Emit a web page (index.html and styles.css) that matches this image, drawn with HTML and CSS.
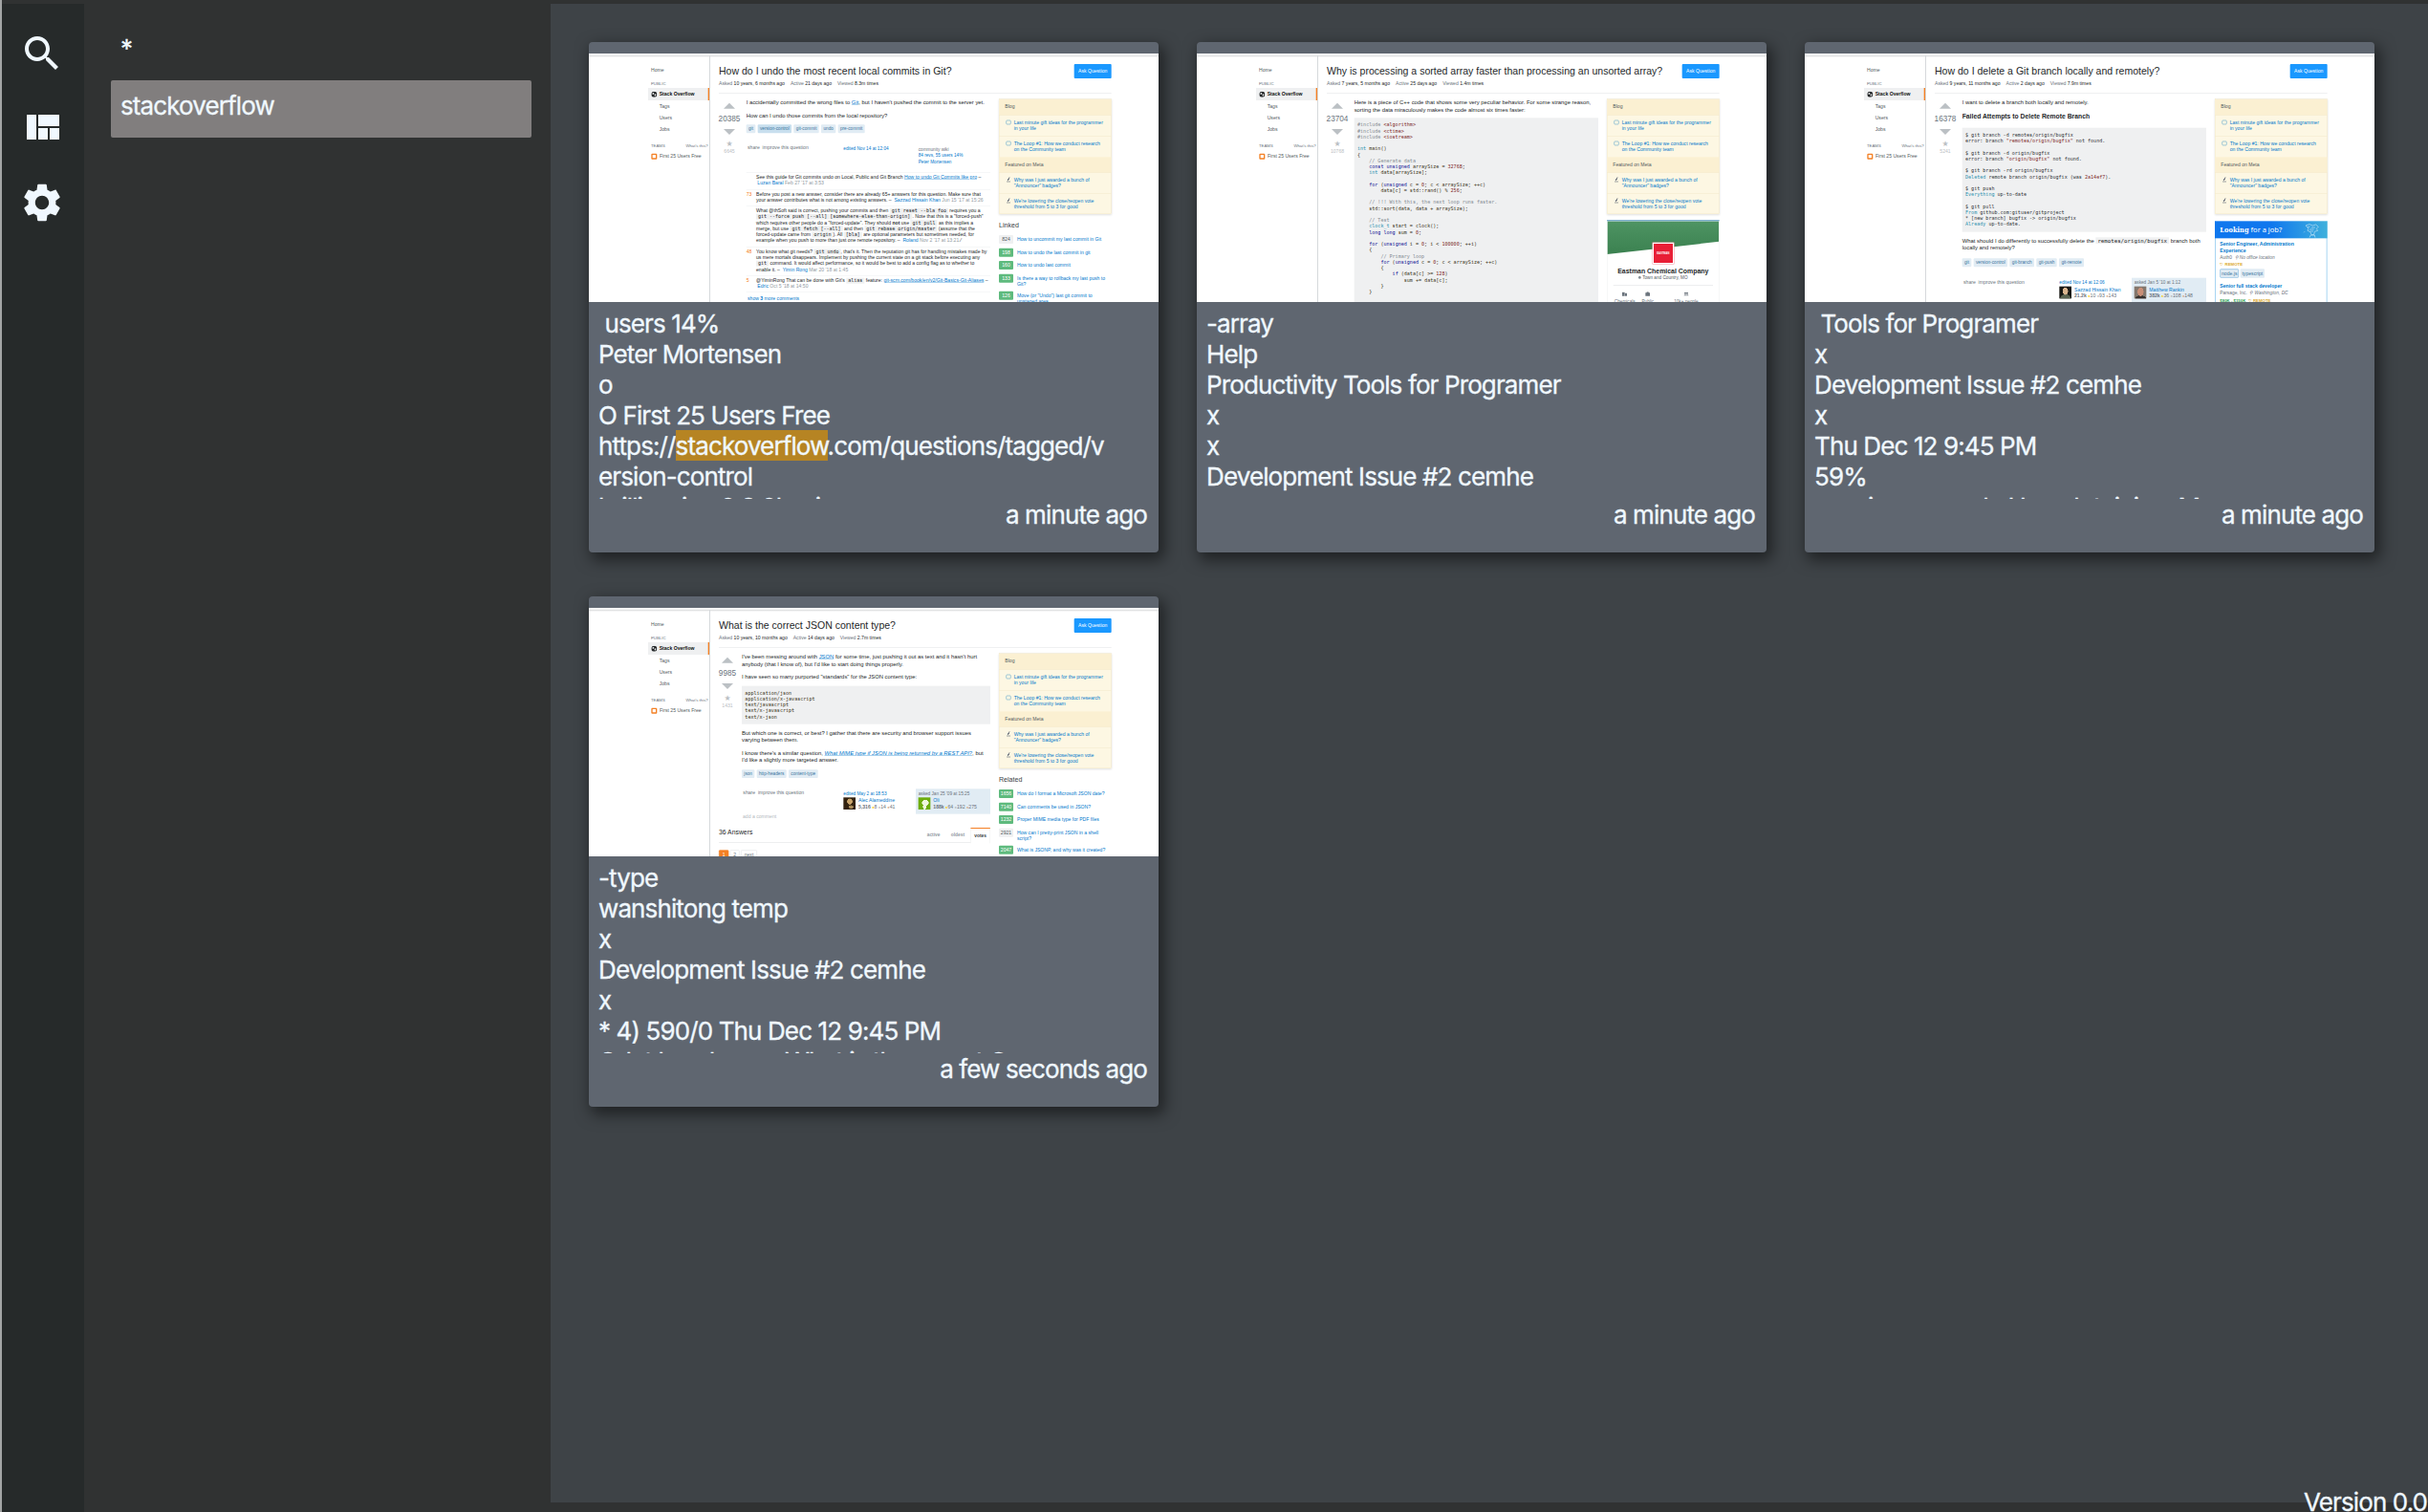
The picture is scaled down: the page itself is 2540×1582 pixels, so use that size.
FILE: index.html
```html
<!DOCTYPE html>
<html lang="en">
<head>
<meta charset="utf-8">
<title>Search</title>
<link rel="stylesheet" href="styles.css">
</head>
<body>
<div class="app">
  <nav class="rail">
    <svg class="icon" viewBox="0 0 24 24"><path d="M15.5 14h-.79l-.28-.27C15.41 12.59 16 11.11 16 9.5 16 5.91 13.09 3 9.5 3S3 5.91 3 9.5 5.91 16 9.5 16c1.61 0 3.09-.59 4.23-1.57l.27.28v.79l5 4.99L20.49 19l-4.99-5zm-6 0C7.01 14 5 11.99 5 9.5S7.01 5 9.5 5 14 7.01 14 9.5 11.99 14 9.5 14z"/></svg>
    <svg class="icon" viewBox="0 0 24 24"><path d="M10 18h5v-6h-5v6zm-6 0h5V5H4v13zm12 0h5v-6h-5v6zM10 5v6h11V5H10z"/></svg>
    <svg class="icon" viewBox="0 0 24 24"><path d="M19.14 12.94c.04-.3.06-.61.06-.94 0-.32-.02-.64-.07-.94l2.03-1.58c.18-.14.23-.41.12-.61l-1.92-3.32c-.12-.22-.37-.29-.59-.22l-2.39.96c-.5-.38-1.03-.7-1.62-.94l-.36-2.54c-.04-.24-.24-.41-.48-.41h-3.84c-.24 0-.43.17-.47.41l-.36 2.54c-.59.24-1.13.57-1.62.94l-2.39-.96c-.22-.08-.47 0-.59.22L2.74 8.87c-.12.21-.08.47.12.61l2.03 1.58c-.05.3-.09.63-.09.94s.02.64.07.94l-2.03 1.58c-.18.14-.23.41-.12.61l1.92 3.32c.12.22.37.29.59.22l2.39-.96c.5.38 1.03.7 1.62.94l.36 2.54c.05.24.24.41.48.41h3.84c.24 0 .44-.17.47-.41l.36-2.54c.59-.24 1.13-.56 1.62-.94l2.39.96c.22.08.47 0 .59-.22l1.92-3.32c.12-.22.07-.47-.12-.61l-2.01-1.58zM12 15.6c-1.98 0-3.6-1.62-3.6-3.6s1.62-3.6 3.6-3.6 3.6 1.62 3.6 3.6-1.62 3.6-3.6 3.6z"/></svg>
  </nav>
  <aside class="queries">
    <div class="query">*</div>
    <div class="query selected">stackoverflow</div>
  </aside>
  <main class="results">

    <article class="card">
      <div class="thumb"><div class="page">
        <div class="nav">
          <div class="nav-home">Home</div><div class="nav-label">PUBLIC</div>
          <div class="nav-on"><svg class="globe" viewBox="0 0 18 18"><circle cx="9" cy="9" r="9"/><path d="M4 5l4-1 1 3-3 3-3-2zM10 9l4-1 1 3-3 4-2-2z"/></svg>Stack Overflow</div>
          <div class="nav-item">Tags</div><div class="nav-item">Users</div><div class="nav-item">Jobs</div>
          <div class="nav-label teams"><span>TEAMS</span><span>What's this?</span></div>
          <div class="nav-free"><i class="team-icon"></i>First 25 Users Free</div>
        </div>
        <div class="content">
          <div class="head"><div class="title">How do I undo the most recent local commits in Git?</div><div class="ask">Ask Question</div></div>
          <div class="meta"><span>Asked <b>10 years, 6 months ago</b></span><span>Active <b>21 days ago</b></span><span>Viewed <b>8.3m times</b></span></div>
          <div class="cols">
            <div class="votes"><i class="up"></i><div class="count">20385</div><i class="down"></i><div class="star">★</div><div class="fav">6645</div></div>
            <div class="post">
              <p>I accidentally committed the wrong files to <u>Git</u>, but I haven't pushed the commit to the server yet.</p>
              <p>How can I undo those commits from the local repository?</p>
              <div class="tags t1"><span>git</span><span class="dark">version-control</span><span>git-commit</span><span>undo</span><span>pre-commit</span></div>
              <div class="sig s1"><div class="share">share  improve this question</div><div class="edited"><a>edited Nov 14 at 12:04</a></div><div class="wiki">community wiki<br><a>84 revs, 55 users 14%<br>Peter Mortensen</a></div></div>
              <div class="comments">
                <div class="c c1"><b></b><div>See this guide for Git commits undo on Local, Public and Git Branch <u>How to undo Git Commits like pro</u> –<br> <a>Luzan Baral</a> <s>Feb 27 '17 at 3:53</s></div></div>
                <div class="c c2"><b>73</b><div>Before you post a new answer, consider there are already 65+ answers for this question. Make sure that<br>your answer contributes what is not among existing answers. – <a>Sazzad Hissain Khan</a> <s>Jun 15 '17 at 15:26</s></div></div>
                <div class="c c3"><b></b><div>What @thSoft said is correct, pushing your commits and then <code>git reset --bla foo</code> requires you a<br><code>git --force push [--all] [somewhere-else-than-origin]</code>. Note that this is a "forced-push"<br>which requires other people do a "forced-update". They should <strong>not</strong> use <code>git pull</code> as this implies a<br>merge, but use <code>git fetch [--all]</code> and then <code>git rebase origin/master</code> (assume that the<br>forced-update came from <code>origin</code>). All <code>[bla]</code> are optional parameters but sometimes needed, for<br>example when you push to more than just one remote repository. – <a>Roland</a> <s>Nov 2 '17 at 13:21</s> ⁄</div></div>
                <div class="c c4"><b>48</b><div>You know what git needs? <code>git undo</code>, that's it. Then the reputation git has for handling mistakes made by<br>us mere mortals disappears. Implement by pushing the current state on a git stack before executing any<br><code>git</code> command. It would affect performance, so it would be best to add a config flag as to whether to<br>enable it. – <a>Yimin Rong</a> <s>Mar 20 '18 at 1:45</s></div></div>
                <div class="c c5"><b>5</b><div>@YiminRong That can be done with Git's <code>alias</code> feature: <u>git-scm.com/book/en/v2/Git-Basics-Git-Aliases</u> –<br> <a>Edric</a> <s>Oct 5 '18 at 14:50</s></div></div>
                <div class="more">show <b>3</b> more comments</div>
              </div>
            </div>
            <div class="side">
              <div class="blog"><h6>Blog</h6><div><i class="chat"></i>Last minute gift ideas for the programmer<br>in your life</div><div><i class="chat"></i>The Loop #1: How we conduct research<br>on the Community team</div><h6>Featured on Meta</h6><div><i class="meta-icon"></i>Why was I just awarded a bunch of<br>"Announcer" badges?</div><div><i class="meta-icon"></i>We're lowering the close/reopen vote<br>threshold from 5 to 3 for good</div></div>
              <h5>Linked</h5>
              <div class="link"><span class="grey">824</span>How to uncommit my last commit in Git</div>
              <div class="link"><span>198</span>How to undo the last commit in git</div>
              <div class="link"><span>160</span>How to undo last commit</div>
              <div class="link two"><span>133</span>Is there a way to rollback my last push to<br>Git?</div>
              <div class="link two"><span>126</span>Move (or "Undo") last git commit to<br>unstaged area</div>
            </div>
          </div>
        </div>
      </div></div>
      <div class="text"> users 14%
Peter Mortensen
o
O First 25 Users Free
https://<mark>stackoverflow</mark>.com/questions/tagged/v
ersion-control
brilliansien 2 8 2l oni</div>
      <div class="date">a minute ago</div>
    </article>

    <article class="card">
      <div class="thumb"><div class="page">
        <div class="nav">
          <div class="nav-home">Home</div><div class="nav-label">PUBLIC</div>
          <div class="nav-on"><svg class="globe" viewBox="0 0 18 18"><circle cx="9" cy="9" r="9"/><path d="M4 5l4-1 1 3-3 3-3-2zM10 9l4-1 1 3-3 4-2-2z"/></svg>Stack Overflow</div>
          <div class="nav-item">Tags</div><div class="nav-item">Users</div><div class="nav-item">Jobs</div>
          <div class="nav-label teams"><span>TEAMS</span><span>What's this?</span></div>
          <div class="nav-free"><i class="team-icon"></i>First 25 Users Free</div>
        </div>
        <div class="content">
          <div class="head"><div class="title">Why is processing a sorted array faster than processing an unsorted array?</div><div class="ask">Ask Question</div></div>
          <div class="meta"><span>Asked <b>7 years, 5 months ago</b></span><span>Active <b>25 days ago</b></span><span>Viewed <b>1.4m times</b></span></div>
          <div class="cols">
            <div class="votes"><i class="up"></i><div class="count">23704</div><i class="down"></i><div class="star">★</div><div class="fav">10768</div></div>
            <div class="post">
              <p>Here is a piece of C++ code that shows some very peculiar behavior. For some strange reason,<br>sorting the data miraculously makes the code almost six times faster:</p>
              <pre class="cpp"><s>#include </s><em>&lt;algorithm&gt;</em>
<s>#include </s><em>&lt;ctime&gt;</em>
<s>#include </s><em>&lt;iostream&gt;</em>

<a>int</a> main()
{
    <s>// Generate data</s>
    <b>const unsigned</b> arraySize = <em>32768</em>;
    <a>int</a> data[arraySize];

    <b>for</b> (<b>unsigned</b> c = <em>0</em>; c &lt; arraySize; ++c)
        data[c] = std::rand() % <em>256</em>;

    <s>// !!! With this, the next loop runs faster.</s>
    std::sort(data, data + arraySize);

    <s>// Test</s>
    <a>clock_t</a> start = clock();
    <b>long long</b> sum = <em>0</em>;

    <b>for</b> (<b>unsigned</b> i = <em>0</em>; i &lt; <em>100000</em>; ++i)
    {
        <s>// Primary loop</s>
        <b>for</b> (<b>unsigned</b> c = <em>0</em>; c &lt; arraySize; ++c)
        {
            <b>if</b> (data[c] &gt;= <em>128</em>)
                sum += data[c];
        }
    }
</pre>
            </div>
            <div class="side">
              <div class="blog"><h6>Blog</h6><div><i class="chat"></i>Last minute gift ideas for the programmer<br>in your life</div><div><i class="chat"></i>The Loop #1: How we conduct research<br>on the Community team</div><h6>Featured on Meta</h6><div><i class="meta-icon"></i>Why was I just awarded a bunch of<br>"Announcer" badges?</div><div><i class="meta-icon"></i>We're lowering the close/reopen vote<br>threshold from 5 to 3 for good</div></div>
              <div class="company">
                <div class="banner"></div><div class="logo">EASTMAN</div>
                <div class="cname">Eastman Chemical Company</div><div class="cplace"><i></i>Town and Country, MO</div>
                <div class="facts"><div><svg viewBox="0 0 16 14"><path d="M0 1h8v12H0zM9 4h6v9H9z"/></svg>Chemicals</div><div><svg viewBox="0 0 16 14"><path d="M5 0h6v3h4v10H1V3h4z"/></svg>Public</div><div><svg viewBox="0 0 16 14"><circle cx="5" cy="4" r="3"/><circle cx="11" cy="4" r="3"/><path d="M0 12q5-7 10 0zM10 12l-1-3q5-2 7 3z"/></svg>10k+ people</div></div>
              </div>
            </div>
          </div>
        </div>
      </div></div>
      <div class="text">-array
Help
Productivity Tools for Programer
x
x
Development Issue #2 cemhe
</div>
      <div class="date">a minute ago</div>
    </article>

    <article class="card">
      <div class="thumb"><div class="page">
        <div class="nav">
          <div class="nav-home">Home</div><div class="nav-label">PUBLIC</div>
          <div class="nav-on"><svg class="globe" viewBox="0 0 18 18"><circle cx="9" cy="9" r="9"/><path d="M4 5l4-1 1 3-3 3-3-2zM10 9l4-1 1 3-3 4-2-2z"/></svg>Stack Overflow</div>
          <div class="nav-item">Tags</div><div class="nav-item">Users</div><div class="nav-item">Jobs</div>
          <div class="nav-label teams"><span>TEAMS</span><span>What's this?</span></div>
          <div class="nav-free"><i class="team-icon"></i>First 25 Users Free</div>
        </div>
        <div class="content">
          <div class="head"><div class="title">How do I delete a Git branch locally and remotely?</div><div class="ask">Ask Question</div></div>
          <div class="meta"><span>Asked <b>9 years, 11 months ago</b></span><span>Active <b>2 days ago</b></span><span>Viewed <b>7.9m times</b></span></div>
          <div class="cols">
            <div class="votes"><i class="up"></i><div class="count">16378</div><i class="down"></i><div class="star">★</div><div class="fav">5241</div></div>
            <div class="post">
              <p>I want to delete a branch both locally and remotely.</p>
              <h4>Failed Attempts to Delete Remote Branch</h4>
              <pre class="sh">$ git branch -d remotes/origin/bugfix
error: branch <em>"remotes/origin/bugfix"</em> not found.

$ git branch -d origin/bugfix
error: branch <em>"origin/bugfix"</em> not found.

$ git branch -rd origin/bugfix
<a>Deleted</a> remote branch origin/bugfix (was <em>2a14ef7</em>).

$ git push
<a>Everything</a> up-to-date

$ git pull
<a>From</a> github.com:gituser/gitproject
* [new branch] bugfix -&gt; origin/bugfix
<a>Already</a> up-to-date.</pre>
              <p>What should I do differently to successfully delete the <code>remotes/origin/bugfix</code> branch both<br>locally and remotely?</p>
              <div class="tags t3"><span>git</span><span>version-control</span><span>git-branch</span><span>git-push</span><span>git-remote</span></div>
              <div class="sig s3"><div class="share">share  improve this question</div>
                <div class="user edited"><a>edited Nov 14 at 12:06</a><div><i class="face f1"></i><span><a>Sazzad Hissain Khan</a><br><b>21.2k</b> <q>●</q>10 <q class="ag">●</q>93 <q class="br">●</q>143</span></div></div>
                <div class="user asked">asked Jan 5 '10 at 1:12<div><i class="face f2"></i><span><a>Matthew Rankin</a><br><b>382k</b> <q>●</q>36 <q class="ag">●</q>108 <q class="br">●</q>148</span></div></div></div>
            </div>
            <div class="side">
              <div class="blog"><h6>Blog</h6><div><i class="chat"></i>Last minute gift ideas for the programmer<br>in your life</div><div><i class="chat"></i>The Loop #1: How we conduct research<br>on the Community team</div><h6>Featured on Meta</h6><div><i class="meta-icon"></i>Why was I just awarded a bunch of<br>"Announcer" badges?</div><div><i class="meta-icon"></i>We're lowering the close/reopen vote<br>threshold from 5 to 3 for good</div></div>
              <div class="jobs">
                <div class="jobs-head"><span><b>Looking</b> for a job?</span><svg viewBox="0 0 52 44"><path d="M8 6l12-4 10 4 10-3 8 7-6 6 4 6-10 3-2 10h-8l-3-9-9-4 3-7zM14 10h8M26 12h12M20 18h14M22 24h10M20 44l4-8h12l2 8M2 28l3-3"/></svg></div>
                <div class="jobs-body"><strong>Senior Engineer, Administration<br>Experience</strong><div class="firm">Auth0 &nbsp;<i>⚲ No office location</i></div><div class="remote">♡ REMOTE</div><div class="jtags"><span>node.js</span><span>typescript</span></div><strong>Senior full stack developer</strong><div class="firm">Parsage, Inc. &nbsp;<i>⚲ Washington, DC</i></div><div class="remote"><em>$80K - $150K</em> &nbsp;♡ REMOTE</div></div>
              </div>
            </div>
          </div>
        </div>
      </div></div>
      <div class="text"> Tools for Programer
x
Development Issue #2 cemhe
x
Thu Dec 12 9:45 PM
59%
envei censera de Havedr teioi nc M</div>
      <div class="date">a minute ago</div>
    </article>

    <article class="card">
      <div class="thumb"><div class="page">
        <div class="nav">
          <div class="nav-home">Home</div><div class="nav-label">PUBLIC</div>
          <div class="nav-on"><svg class="globe" viewBox="0 0 18 18"><circle cx="9" cy="9" r="9"/><path d="M4 5l4-1 1 3-3 3-3-2zM10 9l4-1 1 3-3 4-2-2z"/></svg>Stack Overflow</div>
          <div class="nav-item">Tags</div><div class="nav-item">Users</div><div class="nav-item">Jobs</div>
          <div class="nav-label teams"><span>TEAMS</span><span>What's this?</span></div>
          <div class="nav-free"><i class="team-icon"></i>First 25 Users Free</div>
        </div>
        <div class="content">
          <div class="head"><div class="title">What is the correct JSON content type?</div><div class="ask">Ask Question</div></div>
          <div class="meta"><span>Asked <b>10 years, 10 months ago</b></span><span>Active <b>14 days ago</b></span><span>Viewed <b>2.7m times</b></span></div>
          <div class="cols">
            <div class="left">
              <div class="qa">
                <div class="votes narrow"><i class="up"></i><div class="count">9985</div><i class="down"></i><div class="star">★</div><div class="fav">1431</div></div>
                <div class="post">
                  <p>I've been messing around with <u>JSON</u> for some time, just pushing it out as text and it hasn't hurt<br>anybody (that I know of), but I'd like to start doing things properly.</p>
                  <p>I have seen so many purported "standards" for the JSON content type:</p>
                  <pre class="json">application/json
application/x-javascript
text/javascript
text/x-javascript
text/x-json</pre>
                  <p>But which one is correct, or best? I gather that there are security and browser support issues<br>varying between them.</p>
                  <p>I know there's a similar question, <u><i>What MIME type if JSON is being returned by a REST API?</i></u>, but<br>I'd like a slightly more targeted answer.</p>
                  <div class="tags t4"><span>json</span><span>http-headers</span><span>content-type</span></div>
                  <div class="sig s4"><div class="share">share  improve this question</div>
                    <div class="user edited"><a>edited May 2 at 18:53</a><div><i class="face f3"></i><span><a>Alec Alameddine</a><br><b>5,316</b> <q>●</q>8 <q class="ag">●</q>14 <q class="br">●</q>41</span></div></div>
                    <div class="user asked">asked Jan 25 '09 at 15:25<div><i class="face f4"></i><span><a>Oli</a><br><b>188k</b> <q>●</q>64 <q class="ag">●</q>192 <q class="br">●</q>275</span></div></div></div>
                  <div class="add">add a comment</div>
                </div>
              </div>
              <div class="answers"><span>36 Answers</span><div class="tabs"><span>active</span><span>oldest</span><span class="on">votes</span></div></div>
              <div class="pager"><span class="on">1</span><span>2</span><span>next</span></div>
            </div>
            <div class="side">
              <div class="blog"><h6>Blog</h6><div><i class="chat"></i>Last minute gift ideas for the programmer<br>in your life</div><div><i class="chat"></i>The Loop #1: How we conduct research<br>on the Community team</div><h6>Featured on Meta</h6><div><i class="meta-icon"></i>Why was I just awarded a bunch of<br>"Announcer" badges?</div><div><i class="meta-icon"></i>We're lowering the close/reopen vote<br>threshold from 5 to 3 for good</div></div>
              <h5>Related</h5>
              <div class="link"><span>1656</span>How do I format a Microsoft JSON date?</div>
              <div class="link"><span>7140</span>Can comments be used in JSON?</div>
              <div class="link"><span>1232</span>Proper MIME media type for PDF files</div>
              <div class="link two"><span class="grey">2921</span>How can I pretty-print JSON in a shell<br>script?</div>
              <div class="link"><span>2047</span>What is JSONP, and why was it created?</div>
            </div>
          </div>
        </div>
      </div></div>
      <div class="text">-type
wanshitong temp
x
Development Issue #2 cemhe
x
* 4) 590/0 Thu Dec 12 9:45 PM
Odnt beedman - What is the comet C</div>
      <div class="date">a few seconds ago</div>
    </article>
  </main>
  <div class="version">Version 0.0.1</div>
</div>
</body>
</html>
```
FILE: styles.css
```css
* { box-sizing: border-box; }
html, body { margin: 0; height: 100%; overflow: hidden; }
body {
  font: 26px/32px Inter, "Liberation Sans", sans-serif;
  letter-spacing: -0.88px;
  -webkit-text-stroke: .3px;
  color: aliceblue;
  background: #303232;
}
.app {
  position: relative;
  display: grid;
  grid-template-columns: 86px 488px 1fr;
  height: 1582px;
  padding-top: 4px;
  border-left: 2px solid #a3a5a5;
  overflow: hidden;
}
.rail {
  display: flex;
  flex-direction: column;
  align-items: flex-start;
  gap: 30px;
  padding: 28px 0 0 18px;
  background: #262a2a;
}
.icon { width: 48px; height: 48px; fill: aliceblue; }
.queries { padding: 20px 20px 0 28px; }
.query { height: 60px; padding: 11px 10px; border-radius: 2px; }
.selected { background: #817e7e; }
.results {
  display: grid;
  grid-template-columns: repeat(3, 596px);
  grid-auto-rows: 534px;
  gap: 46px 40px;
  align-content: start;
  height: 1568px;
  padding: 40px;
  background: #3e4347;
}
.card {
  padding-top: 12px;
  border-radius: 4px;
  background: #5f6670;
  box-shadow: 4px 6px 16px 2px rgba(0, 0, 0, .5);
}
.text {
  height: 200px;
  margin: 6px 10px 0;
  padding-top: 1px;
  overflow: hidden;
  white-space: pre;
}
mark { padding-top: 1px; color: inherit; background: #b68423; }
.date { padding: 1px 12px 0; text-align: right; }
.version { position: absolute; left: 2408px; top: 1556px; white-space: nowrap; }

/* Page previews are laid out at three times their shown size. */
.thumb { width: 596px; height: 260px; overflow: hidden; background: #fff; -webkit-text-stroke: 0; }
.page {
  display: flex;
  width: 1788px;
  height: 780px;
  padding: 6px 0 0 186px;
  overflow: hidden;
  background: linear-gradient(#fff 4px, #dedfe0 7px, #fff 12px);
  color: #242729;
  font: 15.3px/18.8px "Liberation Sans", Arial, sans-serif;
  letter-spacing: 0;
  white-space: nowrap;
  transform: scale(.333333);
  transform-origin: 0 0;
}
.page a { color: #0077cc; }
.page u { color: #0077cc; }
.nav { width: 195px; height: 774px; padding-top: 27px; border-right: 3px solid #d6d9dc; color: #535a60; flex: none; }
.nav-home { height: 45px; padding: 9px; }
.nav-label { height: 30px; padding: 9px 9px 0; font-size: 12.9px; color: #6a737c; }
.nav-on { display: flex; align-items: center; height: 39px; padding-left: 10px; gap: 7px; font-weight: bold; color: #0c0d0e; background: #eff0f1; border-right: 4px solid #f48024; }
.globe { width: 18px; height: 18px; fill: #242729; }
.globe path { fill: #eff0f1; }
.nav-item { height: 36.5px; padding: 9px 0 0 35px; }
.teams { display: flex; justify-content: space-between; height: 46.5px; padding: 25px 4px 0 9px; }
.nav-free { display: flex; align-items: center; gap: 8px; height: 40px; padding-left: 10px; }
.team-icon { width: 18px; height: 18px; border: 4px solid #f48024; border-radius: 3px; }
.content { width: 1232px; margin-left: 27px; }
.head { display: flex; justify-content: space-between; height: 72px; padding-top: 27px; }
.title { padding-top: 2px; font-size: 31.6px; line-height: 42px; }
.ask { width: 117px; height: 45px; text-align: center; line-height: 45px; color: #fff; background: #1a98ff; border-radius: 3px; }
.meta { display: flex; gap: 18px; height: 48px; padding-top: 7px; border-bottom: 2px solid #e8e9ea; color: #6a737c; }
.meta b { font-weight: normal; color: #242729; }
.cols { display: flex; padding-top: 17px; }
.left { width: 852px; flex: none; }
.qa { display: flex; }
.votes { display: flex; flex-direction: column; align-items: center; width: 66px; margin-right: 20px; padding-top: 12px; flex: none; color: #bbc0c4; }
.narrow { width: 54px; margin-right: 18px; }
.up { border: 18px solid transparent; border-top: 0; border-bottom-color: #bbc0c4; }
.down { border: 18px solid transparent; border-bottom: 0; border-top-color: #bbc0c4; }
.count { height: 64px; font-size: 24.7px; line-height: 63px; color: #6a737c; }
.star { height: 40px; padding-top: 19px; font: 24px/20px "DejaVu Sans", sans-serif; }
.fav { padding-top: 4px; }
.post { width: 766px; flex: none; }
.narrow + .post { width: 780px; }
.post p { margin: 0 0 17.5px; font-size: 17.6px; line-height: 22.5px; }
.post pre { margin: 0; background: #eff0f1; font: 15.2px/18.72px "DejaVu Sans Mono", monospace; padding: 13.5px 10px; color: #393318; }
pre b { color: #101094; font-weight: normal; }
.page pre a { color: #2b91af; }
pre s { color: #858c93; text-decoration: none; }
pre em { color: #7d2727; font-style: normal; }
.post .cpp { height: 600px; margin-top: -4px; }
.post .sh { height: 327px; margin-bottom: 16px; color: #303336; }
.post .json { height: 120px; margin: -1px 0 16.5px; }
.post h4 { height: 50px; margin: 0; font-size: 20.4px; line-height: 29px; }
.post code { padding: 0 6px; background: #eff0f1; font: .98em/1 "DejaVu Sans Mono", monospace; }
.tags { display: flex; gap: 7px; }
.tags span { height: 26.5px; padding: 0 7px; font-size: 14.1px; line-height: 26px; color: #39739d; background: #e1ecf4; border-radius: 3px; }
.tags .dark { background: #c8dfee; }
.t1 { margin-top: 3px; }
.t3 { margin-top: 22px; }
.t4 { margin-top: 19px; }
.sig { display: flex; font-size: 14.1px; line-height: 20px; color: #6a737c; white-space: pre; }
.sig .share { width: 305px; padding-left: 4px; font-size: 15.3px; }
.s1 { height: 122px; padding-top: 35px; }
.s1 .edited { width: 235px; padding-top: 3px; }
.s1 .wiki { padding-top: 5px; }
.s3, .s4 { height: 112px; padding-top: 34px; white-space: nowrap; }
.s3 .share, .s4 .share { width: 297px; padding-top: 3px; white-space: pre; }
.narrow + .post .share { width: 311px; }
.user { height: 79px; padding: 4px 8px; }
.user.edited { width: 235px; }
.user.asked { width: 234px; background: #e1ecf4; }
.user > div { display: flex; gap: 9px; padding-top: 3px; }
.user > a { display: block; }
.user span { font-size: 15.3px; }
.user q { quotes: none; font-size: 12px; color: #ffcc01; }
.user .ag { color: #b4b8bc; }
.user .br { color: #d1a684; }
.face { width: 38px; height: 38px; flex: none; }
.f1 { background: radial-gradient(ellipse 9px 12px at 19px 15px, #d9b48e 90%, transparent), radial-gradient(ellipse 17px 14px at 19px 38px, #59624f 90%, transparent), #171713; }
.f2 { background: radial-gradient(ellipse 10px 14px at 20px 17px, #c98f77 90%, transparent), radial-gradient(ellipse 18px 10px at 20px 38px, #38322f 90%, transparent), #83776d; }
.f3 { background: radial-gradient(ellipse 9px 10px at 20px 13px, #c9a36a 85%, transparent), radial-gradient(ellipse 8px 6px at 24px 30px, #a98a58 80%, transparent), #33220f; }
.f4 { background: radial-gradient(ellipse 11px 9px at 22px 17px, #eef6dd 95%, transparent), radial-gradient(ellipse 6px 9px at 20px 29px, #eef6dd 90%, transparent), #6dad0c; }
.c { display: flex; border-top: 1.5px solid #e4e6e8; padding-top: 7px; }
.c > b { width: 31px; flex: none; font-weight: normal; color: #f48024; }
.c s, .more s { color: #9199a1; text-decoration: none; }
.c br + a { margin-left: 4px; }
.c1 { height: 54px; }
.c2 { height: 51px; }
.c3 { height: 131px; }
.c4 { height: 88px; padding-top: 4px; }
.c5 { height: 53px; }
.more { height: 30px; padding: 11px 4px; border-top: 1.5px solid #e4e6e8; color: #0077cc; }
.side { width: 353px; margin-left: 27px; flex: none; color: #0077cc; }
.blog { height: 361px; margin-bottom: 22px; background: #fdf7e3; border: 1px solid #f1e5bc; box-shadow: 0 2px 6px rgba(0, 0, 0, .12); }
.blog h6 { height: 48.6px; margin: 0; padding: 14px 18px; font-size: 15.3px; font-weight: normal; color: #535a60; background: #fbf0d2; }
.blog div { position: relative; height: 66px; padding: 14px 0 0 46px; border-top: 1px solid #f1e5bc; }
.blog i { position: absolute; left: 21px; top: 15px; width: 16px; height: 14px; }
.chat { border: 2px solid #6fb1cf; border-radius: 4px; }
.meta-icon { background: linear-gradient(115deg, transparent 45%, #7b8088 46% 65%, transparent 66%) no-repeat 0 0 / 15px 10px, linear-gradient(#6a737c, #6a737c) no-repeat 2px 12px / 12px 3px; }
.side h5 { margin: 0 0 21px; font-size: 21.2px; font-weight: normal; line-height: 23px; color: #3b4045; }
.link { display: flex; gap: 12px; height: 40.5px; padding-top: 4px; }
.link.two { height: 54px; }
.link span { width: 45px; height: 27px; margin-top: -4px; border-radius: 3px; text-align: center; line-height: 27px; color: #fff; background: #5eba7d; }
.link .grey { color: #535a60; background: #eff0f1; }
.company { display: flex; flex-direction: column; align-items: center; height: 300px; margin-top: -3px; border: 1px solid #e4e6e8; border-top: 3px solid #3b86b5; margin-bottom: -60px; }
.banner { width: 351px; height: 104px; background: linear-gradient(#4e9463, #3b8150); clip-path: polygon(0 0, 100% 0, 100% 62%, 0 100%); }
.logo { width: 68px; height: 68px; margin-top: -37px; border: 4px solid #fff; background: #e81f36; color: #fff; font-size: 8px; font-weight: bold; line-height: 60px; text-align: center; position: relative; }
.cname { margin-top: 9px; font-size: 20.8px; font-weight: bold; line-height: 24px; color: #242729; }
.cplace { font-size: 14px; line-height: 17px; color: #535a60; }
.cplace i { display: inline-block; width: 8px; height: 9px; margin-right: 4px; border-radius: 50%; background: #848d95; }
.facts { display: flex; width: 313px; margin-top: 15px; padding-top: 20px; border-top: 2px solid #e4e6e8; font-size: 14px; color: #6a737c; }
.facts div { flex: 1; text-align: center; line-height: 16px; }
.facts div:last-child { flex: 1 0 96px; }
.facts svg { display: block; width: 16px; height: 14px; margin: 0 auto 7px; fill: #6a737c; }
.jobs { border: 3px solid #a8d5f2; border-top: 0; height: 290px; }
.jobs-head { display: flex; justify-content: space-between; height: 54px; margin: 0 -3px; padding: 0 24px 0 16px; font: 22.5px/52px "Noto Sans", sans-serif; color: #fff; background: linear-gradient(90deg, #0f77ee 50%, #3fb0dc); }
.jobs-head b { font-family: "DejaVu Serif", serif; font-size: 20px; }
.jobs-head svg { width: 52px; height: 44px; margin-top: 8px; fill: none; stroke: #c3e4f5; stroke-width: 2; }
.jobs-body { padding: 10px 13px; }
.firm { height: 22px; padding-top: 3px; font-size: 14.5px; color: #6a737c; }
.remote { height: 24px; padding-top: 4px; font-size: 13px; font-weight: bold; color: #dba82c; }
.remote em { font-style: normal; color: #2f9e53; }
.jtags { display: flex; gap: 5px; height: 48px; padding-top: 2px; }
.jtags span { height: 28px; padding: 0 5px; line-height: 27px; color: #39739d; background: #e1ecf4; border-radius: 3px; }
.jtags span:first-child { border: 2px solid #7bb4dd; line-height: 24px; padding: 0 3px; }
.add { padding-left: 3px; color: #b4b9be; }
.answers { display: flex; justify-content: space-between; width: 852px; height: 48px; margin-top: 25px; border-bottom: 2px solid #e4e6e8; font-size: 20.5px; line-height: 26px; }
.tabs { display: flex; gap: 34px; font-size: 14.5px; font-weight: bold; line-height: 46px; color: #9199a1; }
.tabs .on { width: 62px; height: 49px; margin-left: -15px; text-align: center; color: #3b4045; background: #fff; border: 1px solid #e4e6e8; border-top: 3px solid #f48024; border-bottom: 0; }
.pager { display: flex; gap: 4px; padding-top: 22px; }
.pager span { height: 30px; padding: 0 9px; line-height: 28px; border: 2px solid #e4e6e8; border-radius: 3px; color: #6a737c; }
.pager .on { color: #fff; background: #f48024; border-color: #f48024; }
```
